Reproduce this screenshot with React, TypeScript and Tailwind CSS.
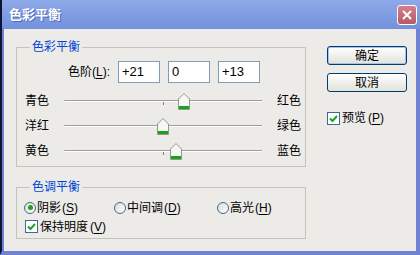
import { FC, ReactNode } from 'react';

const font = `font-['Liberation_Sans','Noto_Sans_CJK_SC',sans-serif]`;

const Mn: FC<{ k: string }> = ({ k }) => (
  <span>
    (<span className="underline underline-offset-2">{k}</span>)
  </span>
);

const Thumb = () => (
  <svg width="12" height="17" viewBox="0 0 12 17">
    <path d="M6 0.5 L11.5 6 V16.5 H0.5 V6 Z" fill="#f7f7f3" stroke="#8c9a8c" />
    <rect x="1" y="13" width="10" height="3" fill="#1f9f1f" />
  </svg>
);

interface SliderRowProps {
  left: string;
  right: string;
  value: number;
}

const SliderRow: FC<SliderRowProps> = ({ left, right, value }) => (
  <div className="flex h-[25px] items-center">
    <span className="ml-[8px] w-[39px]">{left}</span>
    <div className="relative w-[198px]">
      <div className="h-px rounded-l-full bg-[#9d9d9d]" />
      <div className="h-px bg-white" />
      <div className="absolute top-[2px] left-[99px] h-[3px] w-px bg-[#808080]" />
      <div className="absolute top-[-7px]" style={{ left: 99 + value * 0.99 - 6 }}>
        <Thumb />
      </div>
    </div>
    <span className="ml-[15px]">{right}</span>
  </div>
);

const Radio: FC<{ checked?: boolean; children: ReactNode }> = ({ checked, children }) => (
  <span className="flex items-center gap-px">
    <span className="flex h-[12px] w-[12px] items-center justify-center rounded-full border border-[#3c6a94] bg-linear-to-br from-[#dcdcd4] to-white">
      {checked && <span className="h-[5px] w-[5px] rounded-full bg-[#21a121]" />}
    </span>
    {children}
  </span>
);

const Check: FC<{ children: ReactNode }> = ({ children }) => (
  <span className="flex items-center gap-[2px]">
    <span className="flex h-[13px] w-[13px] items-center justify-center border border-[#3c6a94] bg-white">
      <svg width="9" height="9" viewBox="0 0 9 9">
        <path d="M1 4.5 L3.5 7 L8 2" fill="none" stroke="#21a121" strokeWidth="2" />
      </svg>
    </span>
    {children}
  </span>
);

export default function App() {
  return (
    <div className={`${font} flex h-[255px] w-[420px] flex-col bg-[#ecebe8] text-[12px] text-black`}>
      {/* title bar */}
      <div className="flex h-[29px] items-center justify-between border-l-2 border-[#0e1433] bg-linear-to-b from-[#8ea9e8] to-[#7391dc] pr-[3px] pl-[7px]">
        <span className="text-[13px] font-bold text-white [text-shadow:1px_1px_0_#4f69b8]">色彩平衡</span>
        <span className="flex h-[20px] w-[20px] items-center justify-center rounded-[3px] border border-white bg-linear-to-b from-[#d2808a] to-[#b85a68]">
          <svg width="12" height="12" viewBox="0 0 12 12">
            <path d="M2 2 L10 10 M10 2 L2 10" stroke="white" strokeWidth="2" />
          </svg>
        </span>
      </div>

      <div className="flex flex-1 border-b-4 border-l-2 border-r-4 border-[#6f83d4] border-l-[#0e1433]">
        <div className="flex flex-1 border-l-2 border-[#6f83d4]">
          {/* left column */}
          <div className="ml-[12px] w-[290px]">
            <fieldset className="mt-[10px] border border-[#c3c3ba] pb-[3px]">
              <legend className="ml-[13px] px-[2px] leading-[16px] text-[#0046d5]">色彩平衡</legend>
              <div className="mt-[6px] flex h-[22px] items-center">
                <span className="w-[93px] text-right">
                  色阶<Mn k="L" />:
                </span>
                <div className="ml-[8px] flex gap-[8px] text-[13px]">
                  {['+21', '0', '+13'].map(v => (
                    <span key={v} className="flex h-[22px] w-[42px] items-center border border-[#7f9db9] bg-white pl-[3px]">
                      {v}
                    </span>
                  ))}
                </div>
              </div>
              <div className="mt-[5px]">
                <SliderRow left="青色" right="红色" value={21} />
                <SliderRow left="洋红" right="绿色" value={0} />
                <SliderRow left="黄色" right="蓝色" value={13} />
              </div>
            </fieldset>

            <fieldset className="mt-[12px] border border-[#c3c3ba] pb-[2px]">
              <legend className="ml-[13px] px-[2px] leading-[16px] text-[#0046d5]">色调平衡</legend>
              <div className="mt-[3px] flex h-[19px] items-center pl-[7px]">
                <div className="w-[90px]">
                  <Radio checked>
                    阴影<Mn k="S" />
                  </Radio>
                </div>
                <div className="w-[103px]">
                  <Radio>
                    中间调<Mn k="D" />
                  </Radio>
                </div>
                <Radio>
                  高光<Mn k="H" />
                </Radio>
              </div>
              <div className="flex h-[19px] items-center pl-[8px]">
                <Check>
                  保持明度<Mn k="V" />
                </Check>
              </div>
            </fieldset>
          </div>

          {/* right column */}
          <div className="ml-[21px] flex w-[80px] flex-col pt-[17px]">
            <button className="h-[19px] rounded-[3px] border border-[#003c74] bg-linear-to-b from-white to-[#e2e2da] shadow-[inset_0_0_0_1px_#a8c0ee]">
              确定
            </button>
            <button className="mt-[8px] h-[19px] rounded-[3px] border border-[#003c74] bg-linear-to-b from-white to-[#e2e2da]">
              取消
            </button>
            <div className="mt-[17px]">
              <Check>
                预览<Mn k="P" />
              </Check>
            </div>
          </div>
        </div>
      </div>
    </div>
  );
}
